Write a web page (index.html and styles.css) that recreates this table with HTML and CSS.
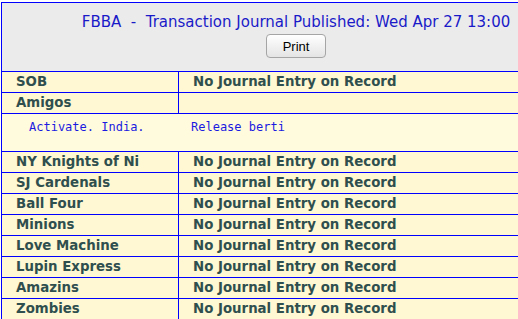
FILE: index.html
```html
<!DOCTYPE html>
<html>
<head>
<meta charset="utf-8">
<link rel="stylesheet" href="styles.css">
</head>
<body>
<div class="page">
<table class="journal">
  <colgroup><col class="c1"><col class="c2"></colgroup>
  <tr>
    <td class="head" colspan="2">
      <div class="title">FBBA&nbsp; - &nbsp;Transaction Journal Published: Wed Apr 27 13:00</div>
      <button class="print">Print</button>
    </td>
  </tr>
  <tr class="row"><td>SOB</td><td>No Journal Entry on Record</td></tr>
  <tr class="row"><td>Amigos</td><td></td></tr>
  <tr class="detail"><td colspan="2"><span class="act">Activate. India.</span><span class="rel">Release berti</span></td></tr>
  <tr class="row"><td>NY Knights of Ni</td><td>No Journal Entry on Record</td></tr>
  <tr class="row"><td>SJ Cardenals</td><td>No Journal Entry on Record</td></tr>
  <tr class="row"><td>Ball Four</td><td>No Journal Entry on Record</td></tr>
  <tr class="row"><td>Minions</td><td>No Journal Entry on Record</td></tr>
  <tr class="row"><td>Love Machine</td><td>No Journal Entry on Record</td></tr>
  <tr class="row"><td>Lupin Express</td><td>No Journal Entry on Record</td></tr>
  <tr class="row"><td>Amazins</td><td>No Journal Entry on Record</td></tr>
  <tr class="row"><td>Zombies</td><td>No Journal Entry on Record</td></tr>
</table>
</div>
</body>
</html>
```
FILE: styles.css
```css
html, body {
  margin: 0;
  padding: 0;
  background: #ffffff;
  overflow: hidden;
}
.page {
  padding: 2px 0 0 1px;
}
.journal {
  border-collapse: collapse;
  table-layout: fixed;
  width: 590px;
  border: 1px solid #0000ff;
  font-family: "DejaVu Sans", Verdana, sans-serif;
}
.c1 { width: 177px; }
.journal td {
  border: 1px solid #0000ff;
  padding: 0;
}
.head {
  background: #ebebeb;
  text-align: center;
  padding: 10px 0 13px !important;
}
.title {
  font-size: 15px;
  line-height: 19px;
  color: #1a1ac8;
  white-space: nowrap;
}
.print {
  margin-top: 2px;
  width: 60px;
  height: 24px;
  font-family: "Liberation Sans", Arial, sans-serif;
  font-size: 13px;
  color: #000;
  background: linear-gradient(#ffffff, #e4e4e4);
  border: 1px solid #a5a5a5;
  border-radius: 4px;
  padding: 0;
  display: inline-block;
  vertical-align: top;
}
.row td {
  background: #fff8d2;
  height: 20px;
  line-height: 20px;
  font-size: 13.33px;
  font-weight: bold;
  color: #2f4f4f;
  padding-left: 14px;
  white-space: nowrap;
  overflow: hidden;
}
.detail td {
  background: #fffbdc;
  height: 38px;
  vertical-align: top;
  box-sizing: border-box;
  padding: 5px 0 0 0;
  font-family: "DejaVu Sans Mono", monospace;
  font-size: 12px;
  line-height: 16px;
  color: #1a1ae0;
  white-space: pre;
}
.act {
  display: inline-block;
  margin-left: 27px;
  width: 162px;
}
.rel {
  display: inline-block;
}
```
